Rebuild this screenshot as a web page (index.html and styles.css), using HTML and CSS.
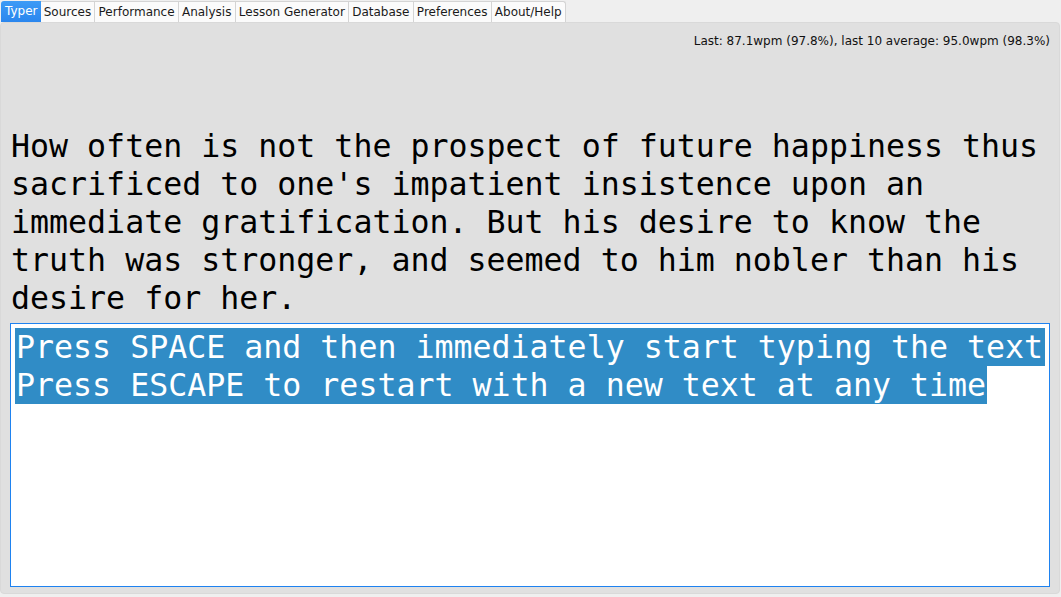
FILE: index.html
```html
<!DOCTYPE html>
<html>
<head>
<meta charset="utf-8">
<link rel="stylesheet" href="styles.css">
</head>
<body>
<div class="window">
  <div class="tabbar">
    <div class="tab active">Typer</div>
    <div class="tab">Sources</div>
    <div class="tab">Performance</div>
    <div class="tab">Analysis</div>
    <div class="tab">Lesson Generator</div>
    <div class="tab">Database</div>
    <div class="tab">Preferences</div>
    <div class="tab last">About/Help</div>
  </div>
  <div class="pane">
    <div class="stats">Last: 87.1wpm (97.8%), last 10 average: 95.0wpm (98.3%)</div>
    <div class="textarea">
      <div class="target">How often is not the prospect of future happiness thus sacrificed to one's impatient insistence upon an immediate gratification. But his desire to know the truth was stronger, and seemed to him nobler than his desire for her.</div>
    </div>
    <div class="editor">
      <div class="sel first">Press SPACE and then immediately start typing the text</div>
      <div class="sel">Press ESCAPE to restart with a new text at any time</div>
    </div>
  </div>
</div>
</body>
</html>
```
FILE: styles.css
```css
html, body {
  margin: 0;
  padding: 0;
  width: 1061px;
  height: 597px;
  overflow: hidden;
  background: #efefef;
  font-family: "DejaVu Sans", sans-serif;
  font-size: 12px;
  color: #000;
}
.window {
  display: flex;
  flex-direction: column;
  height: 597px;
}
.tabbar {
  display: flex;
  height: 22px;
  padding: 1px 0 0 1px;
  box-sizing: border-box;
}
.tab {
  height: 21px;
  line-height: 21px;
  padding: 0 3.2px 0 3.2px;
  background: #fbfbfb;
  border: 1px solid #d4d4d4;
  border-bottom: none;
  border-left: none;
  box-sizing: border-box;
  color: #1a1a1a;
  white-space: nowrap;
}
.tab.active {
  background: linear-gradient(#3d9bf6, #2a86ee);
  color: #fff;
  border: none;
  border-radius: 3px 0 0 0;
  padding: 0 3px 0 4px;
}
.tab.last {
  border-radius: 0 3px 0 0;
}
.pane {
  flex: 1;
  margin: 0 1px 3px 0;
  background: #e0e0e0;
  border: 1px solid #d9d9d9;
  border-radius: 4px;
  display: flex;
  flex-direction: column;
  padding: 10px 9px 6px 9px;
  min-height: 0;
}
.stats {
  text-align: right;
  line-height: 16px;
  color: #111;
}
.textarea {
  flex: 1;
  display: flex;
  flex-direction: column;
  justify-content: flex-end;
  padding-bottom: 6px;
}
.target {
  font-family: "DejaVu Sans Mono", monospace;
  font-size: 31.6px;
  line-height: 38px;
  color: #000;
  padding-left: 1px;
  width: 1036px;
}
.editor {
  height: 264px;
  box-sizing: border-box;
  background: #fff;
  border: 1px solid #1e82f0;
  padding: 4px;
  font-family: "DejaVu Sans Mono", monospace;
  font-size: 31.6px;
  line-height: 38px;
  color: #fff;
}
.sel {
  background: #308cc6;
  width: fit-content;
  white-space: nowrap;
  height: 38px;
  padding-left: 1px;
  padding-right: 1px;
}
.sel.first {
  padding-right: 2px;
}
```
